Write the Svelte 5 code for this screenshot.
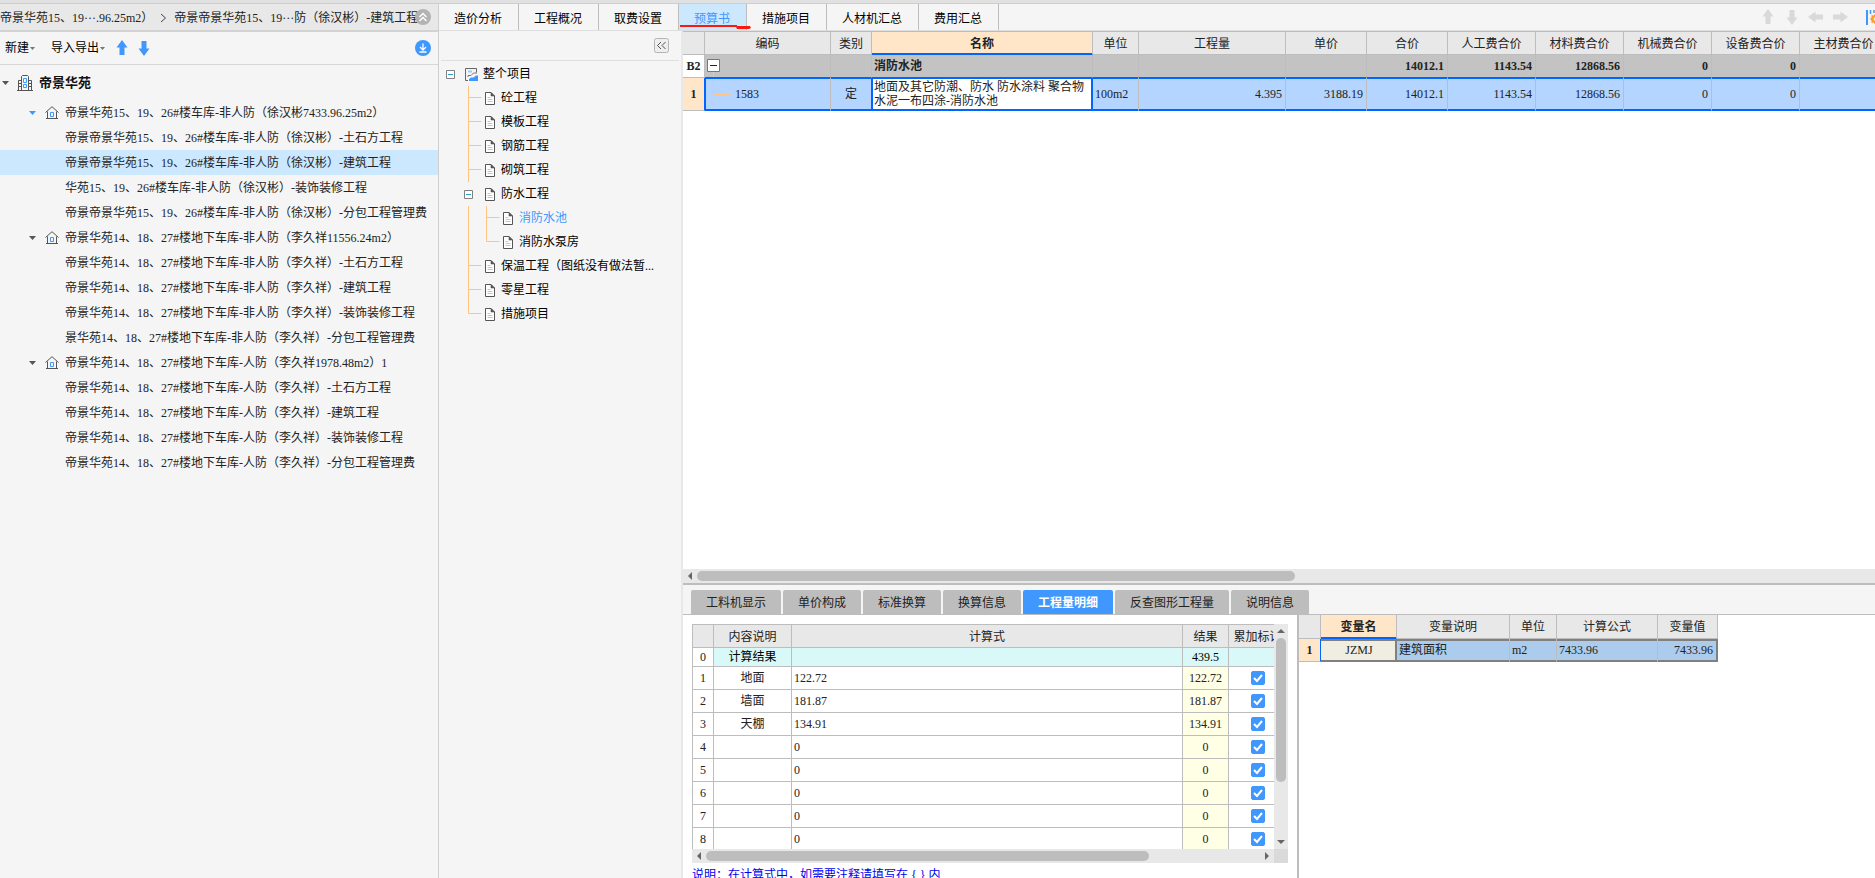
<script lang="ts">
  const projects = [
    {
      name: '帝景华苑15、19、26#楼车库-非人防（徐汉彬7433.96.25m2）',
      current: true,
      items: [
        '帝景帝景华苑15、19、26#楼车库-非人防（徐汉彬）-土石方工程',
        '帝景帝景华苑15、19、26#楼车库-非人防（徐汉彬）-建筑工程',
        '华苑15、19、26#楼车库-非人防（徐汉彬）-装饰装修工程',
        '帝景帝景华苑15、19、26#楼车库-非人防（徐汉彬）-分包工程管理费'
      ]
    },
    {
      name: '帝景华苑14、18、27#楼地下车库-非人防（李久祥11556.24m2）',
      current: false,
      items: [
        '帝景华苑14、18、27#楼地下车库-非人防（李久祥）-土石方工程',
        '帝景华苑14、18、27#楼地下车库-非人防（李久祥）-建筑工程',
        '帝景华苑14、18、27#楼地下车库-非人防（李久祥）-装饰装修工程',
        '景华苑14、18、27#楼地下车库-非人防（李久祥）-分包工程管理费'
      ]
    },
    {
      name: '帝景华苑14、18、27#楼地下车库-人防（李久祥1978.48m2）1',
      current: false,
      items: [
        '帝景华苑14、18、27#楼地下车库-人防（李久祥）-土石方工程',
        '帝景华苑14、18、27#楼地下车库-人防（李久祥）-建筑工程',
        '帝景华苑14、18、27#楼地下车库-人防（李久祥）-装饰装修工程',
        '帝景华苑14、18、27#楼地下车库-人防（李久祥）-分包工程管理费'
      ]
    }
  ];
  let selectedItem = $state('帝景帝景华苑15、19、26#楼车库-非人防（徐汉彬）-建筑工程');

  const tabs = ['造价分析', '工程概况', '取费设置', '预算书', '措施项目', '人材机汇总', '费用汇总'];
  let activeTab = $state('预算书');

  const sections = [
    { name: '砼工程', level: 1 },
    { name: '模板工程', level: 1 },
    { name: '钢筋工程', level: 1 },
    { name: '砌筑工程', level: 1 },
    { name: '防水工程', level: 1, open: true },
    { name: '消防水池', level: 2 },
    { name: '消防水泵房', level: 2, last: true },
    { name: '保温工程（图纸没有做法暂...', level: 1 },
    { name: '零星工程', level: 1 },
    { name: '措施项目', level: 1, last: true }
  ];
  let selectedSection = $state('消防水池');

  const columns = [
    { label: '编码', width: 126 },
    { label: '类别', width: 41 },
    { label: '名称', width: 221 },
    { label: '单位', width: 46 },
    { label: '工程量', width: 147 },
    { label: '单价', width: 81 },
    { label: '合价', width: 81 },
    { label: '人工费合价', width: 88 },
    { label: '材料费合价', width: 88 },
    { label: '机械费合价', width: 88 },
    { label: '设备费合价', width: 88 },
    { label: '主材费合价', width: 88 }
  ];
  const groupTotals = ['', '', '14012.1', '1143.54', '12868.56', '0', '0', ''];
  const itemValues = ['4.395', '3188.19', '14012.1', '1143.54', '12868.56', '0', '0', ''];

  const detailTabs = ['工料机显示', '单价构成', '标准换算', '换算信息', '工程量明细', '反查图形工程量', '说明信息'];
  let activeDetail = $state('工程量明细');

  let details = $state([
    { name: '地面', expr: '122.72', result: '122.72', sum: true },
    { name: '墙面', expr: '181.87', result: '181.87', sum: true },
    { name: '天棚', expr: '134.91', result: '134.91', sum: true },
    { name: '', expr: '0', result: '0', sum: true },
    { name: '', expr: '0', result: '0', sum: true },
    { name: '', expr: '0', result: '0', sum: true },
    { name: '', expr: '0', result: '0', sum: true },
    { name: '', expr: '0', result: '0', sum: true }
  ]);
</script>

{#snippet caret()}
  <svg class="caret" width="7" height="4" viewBox="0 0 7 4"><path d="M0 0h7L3.5 4z" fill="currentColor" /></svg>
{/snippet}

{#snippet arrow(angle: number)}
  <svg width="16" height="16" viewBox="0 0 16 16">
    <path d="M8 0l5.5 7.5h-3V15h-5V7.5h-3z" fill="currentColor" transform="rotate({angle} 8 8)" />
  </svg>
{/snippet}

{#snippet pageIcon()}
  <svg class="page-icon" width="10" height="13" viewBox="0 0 10 13" fill="none">
    <path d="M.5.5h5.5l3.5 3.5v8.5h-9z" fill="#fff" stroke="#555" />
    <path d="M6 .5v3.5h3.5z" fill="#555" stroke="#555" stroke-width=".6" />
    <path d="M2.5 5.5h3M2.5 7.5h5M2.5 9.5h5" stroke="#c4c4c4" />
  </svg>
{/snippet}

{#snippet minusBox()}
  <svg width="9" height="9" viewBox="0 0 9 9" fill="none">
    <path d="M.5.5h8v8h-8z" fill="#fff" stroke="#808080" />
    <path d="M2 4.5h5" stroke="#2c9fc4" />
  </svg>
{/snippet}

<div class="app">
  <div class="topline"></div>
  <div class="body">
    <aside class="projects">
      <nav class="crumbs">
        <a href="#project">帝景华苑15、19···.96.25m2）</a>
        <svg width="7" height="10" viewBox="0 0 7 10" fill="none"><path d="M1 1l4.5 4L1 9" stroke="#444" /></svg>
        <a href="#unit">帝景帝景华苑15、19···防（徐汉彬）-建筑工程</a>
        <button class="fold" aria-label="收起">
          <svg width="16" height="16" viewBox="0 0 16 16" fill="none">
            <circle cx="8" cy="8" r="8" fill="#b3b3b3" />
            <path d="M4.5 8L8 4.5 11.5 8M4.5 12L8 8.5l3.5 3.5" stroke="#fff" stroke-width="1.4" />
          </svg>
        </button>
      </nav>
      <div class="toolbar">
        <button class="new">新建<svg width="5" height="3" viewBox="0 0 5 3"><path d="M0 0h5L2.5 3z" fill="#777" /></svg></button>
        <button class="io">导入导出<svg width="5" height="3" viewBox="0 0 5 3"><path d="M0 0h5L2.5 3z" fill="#777" /></svg></button>
        <button class="move" aria-label="上移">{@render arrow(0)}</button>
        <button class="move" aria-label="下移">{@render arrow(180)}</button>
        <button class="download" aria-label="下载">
          <svg width="16" height="16" viewBox="0 0 16 16" fill="none">
            <circle cx="8" cy="8" r="8" fill="#4098ff" />
            <path d="M8 3.5v6M5 7l3 3 3-3M4.5 12h7" stroke="#fff" stroke-width="1.3" />
          </svg>
        </button>
      </div>
      <div class="root">
        {@render caret()}
        <svg width="16" height="16" viewBox="0 0 16 16" fill="none" stroke="#555">
          <path d="M0 15.5h16M4.5 15V1.500l1-1h5l1 1V15M1.5 15V5.500h3M1.5 8.5h3M1.5 11.5h3M11.5 5.5h3V15M11.5 8.5h3M11.5 11.5h3" />
          <path d="M6.5 3.5h3v4h-3zM6.5 9.5h3v3h-3z" stroke="#4098ff" />
        </svg>
        <strong>帝景华苑</strong>
      </div>
      <ul>
        {#each projects as project}
          <li>
            <button class="project" class:current={project.current}>
              {@render caret()}
              <svg width="14" height="13" viewBox="0 0 14 13" fill="none">
                <path d="M.5 6.500L7 .7l6.500 5.800M2.500 5.500v7M11.500 5.500v7M1 12.500h12" stroke="#555" />
                <path d="M5.500 6.500h3v4h-3z" stroke="#4098ff" />
              </svg>
              {project.name}
            </button>
            <ul>
              {#each project.items as item}
                <li>
                  <button class="item" class:selected={selectedItem === item} onclick={() => (selectedItem = item)}>{item}</button>
                </li>
              {/each}
            </ul>
          </li>
        {/each}
      </ul>
    </aside>

    <div class="workspace">
      <div class="tabbar">
        {#each tabs as tab}
          <button class="tab" class:active={activeTab === tab} onclick={() => (activeTab = tab)}>
            {tab}
            {#if activeTab === tab}
              <svg class="mark" width="72" height="5" viewBox="0 0 72 5"><path d="M1 0h57v1h13l1 2-2 1H58l-1-2H1z" fill="#fb1a10" /></svg>
            {/if}
          </button>
        {/each}
        <div class="nav-tools">
          <button aria-label="上移">{@render arrow(0)}</button>
          <button aria-label="下移">{@render arrow(180)}</button>
          <button aria-label="左移">{@render arrow(270)}</button>
          <button aria-label="右移">{@render arrow(90)}</button>
          <button class="settings" aria-label="设置">
            <svg width="9" height="15" viewBox="0 0 9 15" fill="none">
              <path d="M1 0v15" stroke="#4098ff" stroke-width="2" />
              <path d="M4.5 0v4M8 0v3" stroke="#4098ff" stroke-width="1.5" />
              <path d="M9 4L7.500 5.500 5.500 5v2.500L4 9l1.500 1.500v2.500l2-.5L9 14v-3.500H7.800v-3H9z" fill="#ff9d1e" />
            </svg>
          </button>
        </div>
      </div>

      <div class="content">
        <section class="sections">
          <div class="sections-head">
            <button aria-label="折叠">
              <svg width="15" height="15" viewBox="0 0 15 15" fill="none">
                <rect x=".5" y=".5" width="14" height="14" rx="2" fill="#eee" stroke="#b4b4b4" />
                <path d="M7 4L3.5 7.5 7 11M11.5 4L8 7.5l3.5 3.5" stroke="#555" />
              </svg>
            </button>
          </div>
          <button class="section top">
            {@render minusBox()}
            <svg class="chart" width="13" height="13" viewBox="0 0 13 13" fill="none">
              <path d="M3 12.500H.5V.5h11v4" stroke="#666" />
              <path d="M3 3.500h4" stroke="#9ccbff" stroke-width="2" />
              <path d="M3 9V7.500h3L8.500 5H12" stroke="#777" />
              <path d="M4 13v-2l2-1.500h2.500L11 7.500h2V13z" fill="#4098ff" />
            </svg>
            整个项目
          </button>
          {#each sections as section}
            <button class="section" class:selected={selectedSection === section.name} onclick={() => (selectedSection = section.name)}>
              {#if section.level === 2}
                <svg width="18" height="24" viewBox="0 0 18 24"><path class="guide" d="M4.5 0v24" /></svg>
              {/if}
              {#if section.open}
                <span class="toggle">{@render minusBox()}</span>
              {:else}
                <svg width="21" height="24" viewBox="0 0 21 24"><path class="guide" d={section.last ? 'M4.5 0v11.5h13' : 'M4.5 0v24M4 11.5h13.5'} /></svg>
              {/if}
              {@render pageIcon()}
              {section.name}
            </button>
          {/each}
        </section>

        <main>
          <div class="grid">
            <table>
              <colgroup>
                <col style="width: 22px" />
                {#each columns as col}
                  <col style="width: {col.width}px" />
                {/each}
              </colgroup>
              <thead>
                <tr>
                  <th></th>
                  {#each columns as col}
                    <th class:focus={col.label === '名称'}>{col.label}</th>
                  {/each}
                </tr>
              </thead>
              <tbody>
                <tr class="group">
                  <th>B2</th>
                  <td class="tree-cell">
                    <svg width="17" height="22" viewBox="0 0 17 22" fill="none">
                      <path d="M8.5 17v5" stroke="#ffc580" />
                      <path d="M2.5 4.5h12v12h-12z" fill="#fff" stroke="#777" />
                      <path d="M5 10.5h7" stroke="#222" />
                    </svg>
                  </td>
                  <td></td>
                  <td class="name">消防水池</td>
                  <td></td>
                  {#each groupTotals as value}
                    <td class="num">{value}</td>
                  {/each}
                </tr>
                <tr class="line">
                  <th>1</th>
                  <td class="tree-cell">
                    <div class="code">
                      <svg width="26" height="32" viewBox="0 0 26 32" fill="none"><path d="M8.5 1v15.5h17" stroke="#ffc580" /></svg>
                      1583
                    </div>
                  </td>
                  <td class="mid">定</td>
                  <td class="name editing">地面及其它防潮、防水 防水涂料 聚合物水泥一布四涂-消防水池</td>
                  <td class="unit">100m2</td>
                  {#each itemValues as value}
                    <td class="num">{value}</td>
                  {/each}
                </tr>
              </tbody>
            </table>
          </div>

          <div class="hscroll">
            <svg width="4" height="8" viewBox="0 0 4 8"><path d="M4 0v8L0 4z" fill="#666" /></svg>
            <div class="track"><div class="thumb main-thumb"></div></div>
          </div>

          <div class="bottom">
            <div class="detail-tabs">
              {#each detailTabs as tab}
                <button class:active={activeDetail === tab} onclick={() => (activeDetail = tab)}>{tab}</button>
              {/each}
            </div>
            <div class="panes">
              <div class="calc">
                <div class="calc-box">
                  <div class="calc-view">
                    <table>
                      <colgroup>
                        <col style="width: 21px" />
                        <col style="width: 78px" />
                        <col />
                        <col style="width: 46px" />
                        <col style="width: 58px" />
                      </colgroup>
                      <thead>
                        <tr><th></th><th>内容说明</th><th>计算式</th><th>结果</th><th>累加标识</th></tr>
                      </thead>
                      <tbody>
                        <tr class="total"><th>0</th><td>计算结果</td><td></td><td>439.5</td><td></td></tr>
                        {#each details as row, i}
                          <tr>
                            <th>{i + 1}</th>
                            <td>{row.name}</td>
                            <td class="expr">{row.expr}</td>
                            <td class="result">{row.result}</td>
                            <td class="tick"><input type="checkbox" aria-label="累加标识 {i + 1}" bind:checked={row.sum} /></td>
                          </tr>
                        {/each}
                      </tbody>
                    </table>
                  </div>
                  <div class="vscroll">
                    <svg width="8" height="4" viewBox="0 0 8 4"><path d="M0 4h8L4 0z" fill="#666" /></svg>
                    <div class="track"><div class="thumb"></div></div>
                    <svg width="8" height="4" viewBox="0 0 8 4"><path d="M0 0h8L4 4z" fill="#666" /></svg>
                  </div>
                </div>
                <div class="calc-foot">
                  <div class="hscroll">
                    <svg width="4" height="8" viewBox="0 0 4 8"><path d="M4 0v8L0 4z" fill="#666" /></svg>
                    <div class="track"><div class="thumb"></div></div>
                    <svg width="4" height="8" viewBox="0 0 4 8"><path d="M0 0v8l4-4z" fill="#666" /></svg>
                  </div>
                  <div class="corner"></div>
                </div>
                <p class="note">说明：在计算式中，如需要注释请填写在 &#123; &#125; 内</p>
              </div>

              <div class="vars">
                <table>
                  <colgroup>
                    <col style="width: 22px" />
                    <col style="width: 76px" />
                    <col style="width: 113px" />
                    <col style="width: 47px" />
                    <col style="width: 101px" />
                    <col style="width: 60px" />
                  </colgroup>
                  <thead>
                    <tr><th></th><th class="focus">变量名</th><th>变量说明</th><th>单位</th><th>计算公式</th><th>变量值</th></tr>
                  </thead>
                  <tbody>
                    <tr>
                      <th>1</th>
                      <td class="var">JZMJ</td>
                      <td>建筑面积</td>
                      <td>m2</td>
                      <td>7433.96</td>
                      <td class="num last">7433.96</td>
                    </tr>
                  </tbody>
                </table>
              </div>
            </div>
          </div>
        </main>
      </div>
    </div>
  </div>
</div>

<style>
  :global(body) {
    margin: 0;
    overflow: hidden;
  }

  .app {
    --line: #bdbdbd;
    --blue: #4098ff;
    --focus: #0066ff;
    display: flex;
    flex-direction: column;
    height: 100vh;
    background: #f5f5f5;
    color: #222;
    font: 12px/16px 'Liberation Serif', 'Noto Sans CJK SC', sans-serif;
  }

  .app * {
    box-sizing: border-box;
  }

  button {
    display: flex;
    align-items: center;
    padding: 0;
    border: 0;
    background: none;
    color: inherit;
    font: inherit;
    white-space: nowrap;
  }

  ul {
    margin: 0;
    padding: 0;
    list-style: none;
  }

  svg {
    display: block;
    flex: none;
  }

  .topline {
    flex: none;
    height: 4px;
    background: #e1e1e1;
    border-bottom: 1px solid #cdcdcd;
  }

  .body {
    flex: 1;
    display: flex;
    min-height: 0;
  }

  /* project tree */
  .projects {
    flex: none;
    width: 439px;
    border-right: 1px solid #cfcfcf;
    overflow: hidden;
  }

  .crumbs {
    position: relative;
    display: flex;
    align-items: center;
    gap: 7px;
    height: 28px;
    padding-top: 2px;
    background: #e8e8e8;
    border-bottom: 2px solid #d2d2d2;
    white-space: nowrap;
  }

  .crumbs a {
    color: inherit;
    text-decoration: none;
  }

  .fold {
    position: absolute;
    right: 7px;
    top: 5px;
  }

  .toolbar {
    display: flex;
    align-items: center;
    height: 33px;
    padding: 0 7px 0 5px;
    border-bottom: 1px solid #d6d6d6;
    color: #000;
  }

  .toolbar button svg {
    margin-left: 1px;
  }

  .io {
    margin-left: 16px;
  }

  .io svg {
    margin-left: 2px;
  }

  .move {
    margin-left: 5px;
    color: var(--blue);
  }

  .io + .move {
    margin-left: 8px;
  }

  .download {
    margin-left: auto;
  }

  .root {
    display: flex;
    align-items: center;
    height: 35px;
    padding-left: 2px;
    font-size: 13px;
    color: #111;
  }

  .root .caret {
    margin-right: 8px;
  }

  .root strong {
    margin-left: 6px;
  }

  .caret {
    color: #555;
  }

  .project {
    width: 100%;
    height: 25px;
    padding-left: 29px;
  }

  .project .caret {
    margin-right: 9px;
  }

  .current .caret {
    color: var(--blue);
  }

  .project svg + svg {
    margin-right: 6px;
  }

  .item {
    width: 100%;
    height: 25px;
    padding-left: 65px;
  }

  .item.selected {
    background: #cce8ff;
  }

  /* workspace */
  .workspace {
    flex: 1;
    display: flex;
    flex-direction: column;
    min-width: 0;
  }

  .tabbar {
    flex: none;
    display: flex;
    height: 27px;
    border-bottom: 1px solid #dedede;
    color: #000;
  }

  .tab {
    position: relative;
    padding: 3px 16px 0 15px;
    border-right: 1px solid var(--line);
  }

  .tab.active {
    background: #cce8ff;
    color: var(--blue);
  }

  .mark {
    position: absolute;
    left: 0;
    top: 21px;
  }

  .nav-tools {
    display: flex;
    align-items: center;
    gap: 8px;
    margin-left: auto;
    color: #d9d9d9;
  }

  .settings {
    margin-left: 10px;
  }

  .content {
    flex: 1;
    display: flex;
    min-height: 0;
  }

  .sections {
    flex: none;
    width: 244px;
    border-right: 2px solid #e8e8e8;
    overflow: hidden;
    color: #000;
  }

  .sections-head {
    display: flex;
    justify-content: flex-end;
    height: 30px;
    margin: 0 2px 1px;
    padding: 7px 10px 0 0;
    border-bottom: 1px solid #dedede;
  }

  .sections-head button {
    height: 15px;
  }

  .section {
    width: 100%;
    height: 24px;
    padding-left: 25px;
  }

  .section.top {
    padding-left: 7px;
  }

  .section.selected {
    color: var(--blue);
  }

  .chart {
    margin: 0 5px 0 10px;
  }

  .toggle {
    width: 21px;
  }

  .page-icon {
    margin-right: 6px;
  }

  .guide {
    fill: none;
    stroke: #ffc580;
  }

  main {
    flex: 1;
    display: flex;
    flex-direction: column;
    min-width: 0;
  }

  /* tables */
  table {
    table-layout: fixed;
    border-collapse: separate;
    border-spacing: 0;
  }

  th,
  td {
    padding: 0;
    border: solid var(--line);
    border-width: 0 1px 1px 0;
    white-space: nowrap;
    overflow: hidden;
  }

  th {
    font-weight: normal;
    text-align: center;
  }

  thead th {
    height: 23px;
    padding-top: 1px;
    background: #e8e8e8;
  }

  thead th.focus {
    background: #ffe6c8;
    border-bottom-color: var(--focus);
    box-shadow: inset 0 -1px var(--focus);
    font-weight: bold;
  }

  .num {
    padding-right: 3px;
    text-align: right;
  }

  .grid {
    flex: 1;
    min-height: 0;
    background: #fff;
    border-top: 1px solid var(--line);
    overflow: hidden;
  }

  .grid table {
    width: 1205px;
  }

  .group td {
    height: 23px;
    background: #c3c3c3;
    border-bottom-color: var(--focus);
    font-weight: bold;
  }

  .group th {
    background: #fff;
    font-weight: bold;
  }

  .line th {
    background: #ffe6c8;
    border-right-color: var(--focus);
    font-weight: bold;
  }

  .line td {
    height: 33px;
    background: #b3d5ff;
    border-bottom-color: var(--focus);
    box-shadow: inset 0 1px var(--focus), inset 0 -1px var(--focus);
  }

  .line td.tree-cell {
    box-shadow: inset 1px 1px var(--focus), inset 0 -1px var(--focus);
  }

  .code {
    display: flex;
    align-items: center;
    gap: 4px;
  }

  .line td.mid {
    text-align: center;
    border-right-color: var(--focus);
  }

  .name {
    padding-left: 2px;
  }

  .line td.editing {
    background: #fff;
    border-right-color: var(--focus);
    box-shadow: inset 0 0 0 1px var(--focus);
    line-height: 14px;
    white-space: normal;
  }

  .unit {
    padding-left: 2px;
  }

  /* scrollbars */
  .hscroll {
    flex: none;
    display: flex;
    align-items: center;
    gap: 5px;
    height: 14px;
    padding: 0 5px;
    background: #e8e8e8;
  }

  .track {
    flex: 1;
  }

  .thumb {
    height: 10px;
    border-radius: 5px;
    background: #bdbdbd;
  }

  .main-thumb {
    width: 51%;
  }

  .calc-foot .thumb {
    width: 80%;
  }

  /* lower panel */
  .bottom {
    flex: none;
    display: flex;
    flex-direction: column;
    height: 295px;
    border-top: 2px solid var(--line);
    overflow: hidden;
  }

  .detail-tabs {
    flex: none;
    display: flex;
    gap: 2px;
    height: 30px;
    padding: 5px 8px 0;
    border-bottom: 1px solid var(--line);
  }

  .detail-tabs button {
    padding: 2px 15px 0;
    background: #bdbdbd;
    border-radius: 2px 2px 0 0;
  }

  .detail-tabs button.active {
    background: var(--blue);
    color: #fff;
    font-weight: bold;
  }

  .panes {
    flex: 1;
    display: grid;
    grid-template-columns: minmax(0, 616fr) minmax(0, 576fr);
    min-height: 0;
    background: #fff;
  }

  .calc {
    padding: 9px 9px 0;
    border-right: 2px solid var(--line);
    overflow: hidden;
  }

  .calc-box {
    display: flex;
    height: 225px;
  }

  .calc-view {
    flex: 1;
    min-width: 0;
    border: solid var(--line);
    border-width: 1px 0 0 1px;
    overflow: hidden;
  }

  .calc-view table {
    width: calc(100% + 13px);
  }

  .calc-view td {
    height: 23px;
    text-align: center;
  }

  .calc-view .total td {
    height: 19px;
    background: #d9f8f8;
    color: #000;
  }

  .calc-view td.expr {
    padding-left: 2px;
    text-align: left;
  }

  .calc-view td.result {
    background: #ffffe6;
  }

  input[type='checkbox'] {
    appearance: none;
    display: block;
    width: 14px;
    height: 14px;
    margin: 0 auto;
    border: 1px solid var(--blue);
    border-radius: 2px;
    background: #fff;
  }

  input[type='checkbox']:checked {
    background: var(--blue)
      url("data:image/svg+xml,%3Csvg xmlns='http://www.w3.org/2000/svg' viewBox='0 0 12 12'%3E%3Cpath d='M2 6l3 3 5-6' fill='none' stroke='white' stroke-width='2'/%3E%3C/svg%3E");
  }

  .vscroll {
    display: flex;
    flex-direction: column;
    align-items: center;
    gap: 5px;
    width: 14px;
    padding: 5px 0;
    background: #e8e8e8;
  }

  .vscroll .thumb {
    width: 10px;
    height: 73%;
  }

  .calc-foot {
    display: flex;
  }

  .calc-foot .hscroll {
    flex: 1;
  }

  .corner {
    width: 14px;
    background: #dadada;
  }

  .note {
    margin: 4px 0 0;
    color: #0000f0;
    white-space: nowrap;
  }

  .vars {
    overflow: hidden;
  }

  .vars table {
    width: 419px;
  }

  .vars thead th {
    height: 24px;
  }

  .vars tbody th {
    background: #ffe6c8;
    border-right-color: var(--focus);
    font-weight: bold;
  }

  .vars td {
    height: 23px;
    padding-left: 2px;
    background: #abccec;
    border-bottom-color: #808080;
    box-shadow: inset 0 2px #808080, inset 0 -1px #808080;
  }

  .vars td.var {
    background: #f0eee0;
    border-right: 2px solid #808080;
    text-align: center;
  }

  .vars td.last {
    border-right: 2px solid #808080;
  }
</style>
